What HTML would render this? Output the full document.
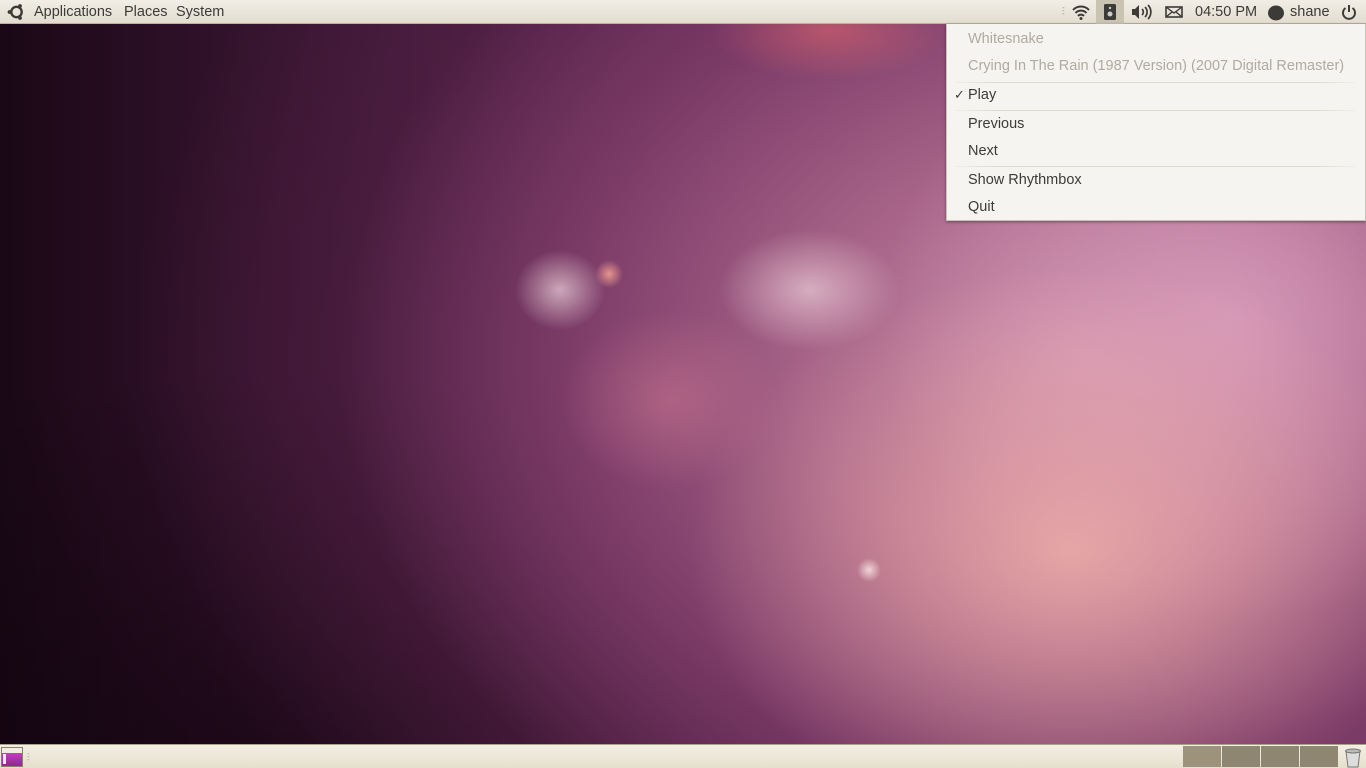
<!DOCTYPE html>
<html><head><meta charset="utf-8"><style>
*{margin:0;padding:0;box-sizing:border-box}
body{width:1366px;height:768px;overflow:hidden;position:relative;font-family:"Liberation Sans","DejaVu Sans",sans-serif;font-size:14.5px;color:#3c3b37;background:#2a0e24}
.bg{position:absolute;left:0;top:0;width:1366px;height:768px;
background:
radial-gradient(ellipse 90px 60px at 810px 290px,rgba(235,205,215,.7),rgba(235,205,215,0)),
radial-gradient(ellipse 45px 40px at 560px 290px,rgba(240,215,220,.7),rgba(240,215,220,0)),
radial-gradient(circle 14px at 609px 274px,rgba(255,170,150,.8),rgba(255,170,150,0)),
radial-gradient(circle 12px at 869px 570px,rgba(255,235,235,.8),rgba(255,235,235,0)),
radial-gradient(ellipse 120px 50px at 830px 30px,rgba(220,100,110,.6),rgba(220,100,110,0)),
radial-gradient(ellipse 380px 280px at 1070px 550px,rgba(240,175,170,.85),rgba(240,175,170,0)),
radial-gradient(ellipse 350px 300px at 1230px 320px,rgba(225,165,195,.75),rgba(225,165,195,0)),
radial-gradient(ellipse 110px 90px at 670px 400px,rgba(205,120,145,.5),rgba(205,120,145,0)),
radial-gradient(ellipse 950px 750px at 1080px 360px,#c68aa6 0%,#a46186 30%,#7a3a66 55%,rgba(80,30,65,.5) 78%,rgba(50,15,40,0) 100%),
radial-gradient(ellipse 900px 400px at 300px 768px,rgba(10,0,8,.6),rgba(10,0,8,0)),
linear-gradient(90deg,#1a0816 0%,#2f1129 15%,#4a1f42 35%,#6c3060 55%,#905078 75%,#a86488 100%);}
.top{position:absolute;left:0;top:0;width:1366px;height:24px;background:linear-gradient(#f1eee6,#e2ddd0);border-bottom:1px solid #b9b29e;}
.top span{position:absolute;top:4px;color:#3c3b37}
.bot{position:absolute;left:0;top:744px;width:1366px;height:24px;background:linear-gradient(#f3efe3,#e5dfcd);border-top:1px solid #a9a08a}
.menu{position:absolute;left:946px;top:24px;width:420px;height:197px;background:#f5f4f0;border:1px solid #c9c3b5;border-top:none;box-shadow:0 1px 3px rgba(0,0,0,.4)}
.menu div{position:absolute;left:21px;color:#3c3b37}
.menu .d{color:#b1aaa0}
.menu hr{position:absolute;left:8px;width:400px;border:none;height:1px;background:linear-gradient(90deg,rgba(220,216,206,.2),#ddd9ce 10%,#ddd9ce 90%,rgba(220,216,206,.2))}
.ws{position:absolute;top:1px;height:21px;width:38px;background:#8f8672}
</style></head><body>
<div class="bg"></div>
<div class="top">
<svg style="position:absolute;left:7px;top:3px" width="18" height="18" viewBox="0 0 18 18"><circle cx="9.5" cy="9" r="5.2" fill="none" stroke="#3c3b37" stroke-width="2.4"/><circle cx="2.5" cy="9" r="1.9" fill="#3c3b37"/><circle cx="13" cy="3" r="1.9" fill="#3c3b37"/><circle cx="13" cy="15" r="1.9" fill="#3c3b37"/></svg>
<span style="left:34px">Applications</span><span style="left:124px">Places</span><span style="left:176px">System</span>
<span style="left:1062px;top:6px;font-size:8px;color:#999;line-height:3px">-<br>-<br>-</span>
<svg style="position:absolute;left:1071px;top:4px" width="20" height="16" viewBox="0 0 20 16"><path d="M2 6a11 11 0 0 1 16 0M4.5 9a7.5 7.5 0 0 1 11 0M7 12a4 4 0 0 1 6 0" fill="none" stroke="#3c3b37" stroke-width="2"/><circle cx="10" cy="14.5" r="1.5" fill="#3c3b37"/></svg>
<div style="position:absolute;left:1096px;top:0;width:28px;height:24px;background:#c9c3b2"></div>
<svg style="position:absolute;left:1103px;top:3px" width="14" height="18" viewBox="0 0 14 18"><rect x="1" y="1" width="12" height="16" rx="1.5" fill="#3c3b37"/><circle cx="7" cy="11" r="2.5" fill="#ccc"/><circle cx="7" cy="5" r="1.2" fill="#ccc"/></svg>
<svg style="position:absolute;left:1131px;top:4px" width="22" height="16" viewBox="0 0 22 16"><path d="M1 5h3l4-4v14l-4-4H1z" fill="#3c3b37"/><path d="M11 5a4 4 0 0 1 0 6M14 3a7 7 0 0 1 0 10M17 1a10 10 0 0 1 0 14" fill="none" stroke="#3c3b37" stroke-width="1.7"/></svg>
<svg style="position:absolute;left:1165px;top:6px" width="18" height="12" viewBox="0 0 18 12"><rect x="1" y="1" width="16" height="10" fill="none" stroke="#3c3b37" stroke-width="1.6"/><path d="M1 1l8 6 8-6M1 11l6-5M17 11l-6-5" fill="none" stroke="#3c3b37" stroke-width="1.4"/></svg>
<span style="left:1195px">04:50 PM</span>
<svg style="position:absolute;left:1267px;top:4px" width="18" height="17" viewBox="0 0 18 17"><ellipse cx="9" cy="9" rx="8" ry="7.5" fill="#3c3b37"/></svg>
<span style="left:1290px">shane</span>
<svg style="position:absolute;left:1341px;top:4px" width="16" height="16" viewBox="0 0 16 16"><path d="M4.5 4a6 6 0 1 0 7 0" fill="none" stroke="#3c3b37" stroke-width="2"/><path d="M8 1v7" stroke="#3c3b37" stroke-width="2"/></svg>
</div>
<div class="menu">
<div class="d" style="top:7px">Whitesnake</div>
<div class="d" style="top:34px">Crying In The Rain (1987 Version) (2007 Digital Remaster)</div>
<hr style="top:58px">
<div style="left:7px;top:63px;font-size:13px">✓</div>
<div style="top:63px">Play</div>
<hr style="top:86px">
<div style="top:92px">Previous</div>
<div style="top:119px">Next</div>
<hr style="top:142px">
<div style="top:148px">Show Rhythmbox</div>
<div style="top:175px">Quit</div>
</div>
<div class="bot">
<div style="position:absolute;left:1px;top:2px;width:22px;height:20px;background:#f0ece0;border:1px solid #8a8070"></div>
<div style="position:absolute;left:2px;top:8px;width:20px;height:13px;background:linear-gradient(#c040c0,#8a2a90)"></div>
<div style="position:absolute;left:3px;top:9px;width:3px;height:10px;background:#eee"></div>
<span style="position:absolute;left:27px;top:7px;font-size:8px;color:#999;line-height:3px">-<br>-<br>-</span>
<div class="ws" style="left:1183px;background:#9d927c"></div><div class="ws" style="left:1222px"></div><div class="ws" style="left:1261px"></div><div class="ws" style="left:1300px"></div>
<svg style="position:absolute;left:1343px;top:2px" width="20" height="21" viewBox="0 0 20 21"><path d="M3 4h14l-2 16H5z" fill="#ddd" stroke="#777"/><ellipse cx="10" cy="4" rx="7.5" ry="2" fill="#bbb" stroke="#777"/></svg>
</div>
</body></html>
